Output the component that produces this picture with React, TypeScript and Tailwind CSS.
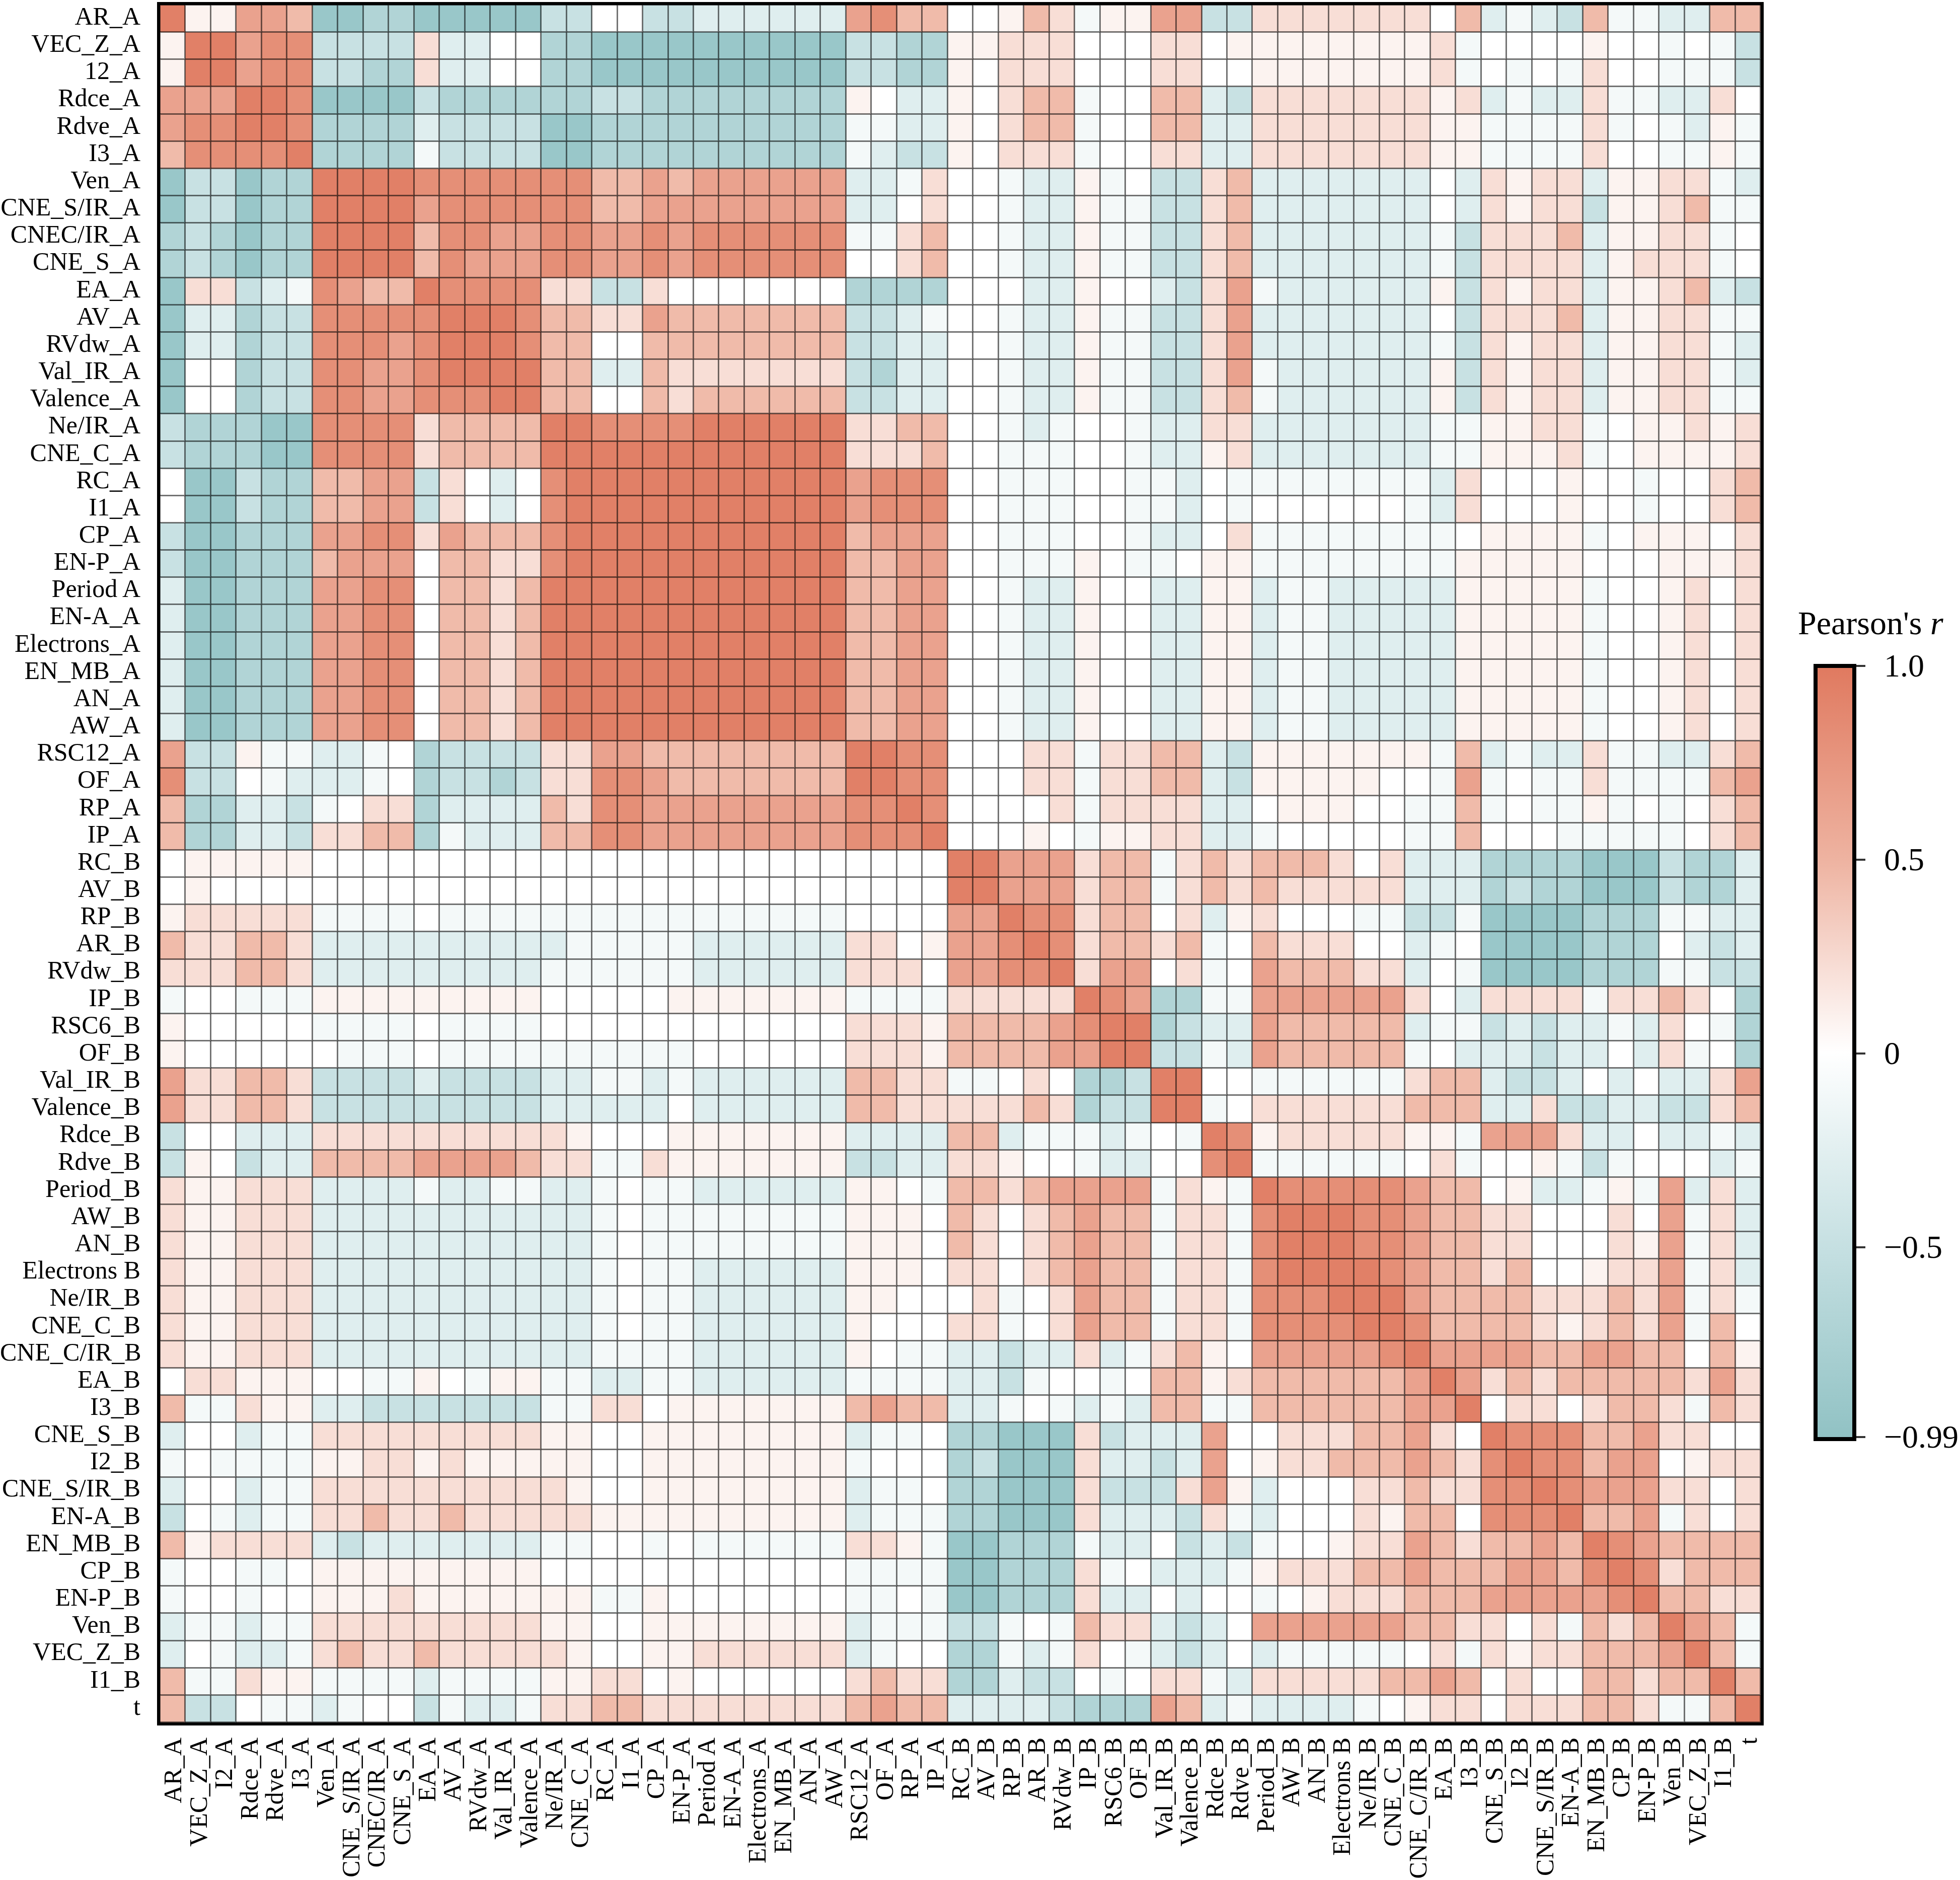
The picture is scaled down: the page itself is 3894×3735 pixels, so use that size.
const LABELS = [
  "AR_A", "VEC_Z_A", "I2_A", "Rdce_A", "Rdve_A", "I3_A", "Ven_A", "CNE_S/IR_A", "CNEC/IR_A", "CNE_S_A",
  "EA_A", "AV_A", "RVdw_A", "Val_IR_A", "Valence_A", "Ne/IR_A", "CNE_C_A", "RC_A", "I1_A", "CP_A",
  "EN-P_A", "Period A", "EN-A_A", "Electrons_A", "EN_MB_A", "AN_A", "AW_A", "RSC12_A", "OF_A", "RP_A",
  "IP_A", "RC_B", "AV_B", "RP_B", "AR_B", "RVdw_B", "IP_B", "RSC6_B", "OF_B", "Val_IR_B",
  "Valence_B", "Rdce_B", "Rdve_B", "Period_B", "AW_B", "AN_B", "Electrons B", "Ne/IR_B", "CNE_C_B", "CNE_C/IR_B",
  "EA_B", "I3_B", "CNE_S_B", "I2_B", "CNE_S/IR_B", "EN-A_B", "EN_MB_B", "CP_B", "EN-P_B", "Ven_B",
  "VEC_Z_B", "I1_B", "t",
];

// row labels print "12_A" for the third entry
const ROW_LABELS = LABELS.map((l, i) => (i === 2 ? "12_A" : l));

// lower triangle of the matrix, one char per cell (cols 0..i)
const base21 = "addcccCCDD0BBABEEEEEE";
const zA = "AppAAA" + "aaaaaaaaa" + "aaq0qq";
const ROWS: string[] = [
  "E",
  "pE",
  "pEE",
  "CCCE",
  "CDDEE",
  "BDDDDE",
  "dbbdccE",
  "dbbdccEE",
  "cbcdccEEE",
  "cbcdccEEEE",
  "dAAbaqDCBBE",
  "daacbbDDDDDE",
  "daacbbDDDCDEE",
  "d00cbbDDCCDEEE",
  "d00cbbDDCCDDDEE",
  "bcccddDDDDABBBBE",
  "bcccddDDDDABBBBEE",
  "0ddbccBBCCbA0a0DEE",
  "0ddbccBBCCbA0a0DEEE",
  "bddcccCCDDACBBBDEEEE",
  "bddcccBCCC0BBAADEEEEE",
  base21 + "E",
  base21 + "EE",
  base21 + "EEE",
  base21 + "EEEE",
  base21 + "EEEEE",
  base21 + "EEEEEE",
  "Cbbpqqaaq0cbbbbAACCBB" + "BBBBBBE",
  "Dbb0qaaaq0cbbcbAADDCB" + "BBBBBBEE",
  "Bccaabq0AAcaaaaBADDCC" + "CCCCCCDDE",
  "BccaabAABBcqaaaBBDDCC" + "CCCCCCDDDE",
  "0ppppp000000000000000" + "0000000000E",
  "0p0000000000000000000" + "0000000000EE",
  "pAAAAAqqqq0qqqqqqqqqq" + "qqqqqq0000CCE",
  "BAABBAaaaaaaaaaaqqqqq" + "aaaaaaAA0pCCDE",
  "AAABBAaaaaaaaaaqqqqqq" + "aaaaaaAAA0CCDDE",
  "q00qqqppppppppp00000p" + "ppppppqqqqAAAAAE",
  "p00000qqqq0qqqq000000" + "000000AAApBBBBCDE",
  "p000000qqq0qqqqqqqqqq" + "000000AAApBBBBCCEE",
  "CAABBAbbbbabbbbaaqqaq" + "aaaaaaBBAAqq0A0ccbE",
  "CAABBAbbbbbbbbbaaaaa0" + "aaaaaaBBAAAAABAcbbEE",
  "b00aaaAAAAAAAAAAp000p" + "ppppppaaaaBBaqqqaq0qE",
  "bp0baaBBBBCCCCBAAqqAp" + "ppppppbbaaAAp00qaa00D" + "E",
  "AppAAAaaaaqaaqqaaq0qq" + "aaaaaapp0qBBABCCCCqAp" + "qE",
  zA + "qqqqqqppp0BA0ABCBBqAA" + "qDE",
  zA + "qqqqqqppp0BA0ABCBBqAA" + "qDEE",
  zA + "aaaaaappp0AA0ABCBBqAA" + "qDEEE",
  zA + "aaaaaapp000Aq0ACBBqAA" + "qDDDEE",
  zA + "aaaaaap000AAq0ACBBqAA" + "qDDDDEE",
  "AppAAAaaaaaaaaaaaqqqq" + "aaaaaap0qqaabaaAaqABp" + "0CCCCCDE",
  "0AAppp00qqp0qppqqaaqq" + "aaaaaaqqqqaabq00q0BBp" + "ABBBBBBCE",
  "BqqAppaabbbbbbbqqAA0p" + "ppppppBCBBaaq0qaqaBBq" + "qBBBBBBCCE",
  "a00aqqAAAAAAAAApp00pp" + "ppppppaqq0ccdddAbaaaC" + "00AAABBCA0E",
  "q0qqqqppAApApppp p00pp".replace(" ", "") + "ppppppq000cbdddAaabaC" + "0pAABBBCBADE",
  "a00aqqAAAAAAAAAAp00pp" + "ppppppaqq0ccdddAbbbAC" + "pa000AABAADDE",
  "b0qaqqAABAABAAAAApppp" + "ppppppaqqqccdddAaaabA" + "qa000ApBB0DDDE",
  "BpAAAAabaaaaaaaqq00q0" + "qqqqqqAApqddcccqaa0ba" + "bq00pAACBABBCBE",
  "q00qq0ppppppppp000000" + "000000qqqqddcccAq0aaa" + "qpAAABBCBBBCCBDE",
  "q00q00pppApppppppqqp0" + "000000qq0qddcccAaa0a0" + "0q0pAAABBBCCCCCDE",
  "aqqaqqAAAAAAAAApp00pp" + "ppppppaqqqbbq0qBAAaba" + "0CCCCCCBBAA0AqBABE",
  "a0qaaqABAABAAAAAp00pp" + "AAAAAAaq00ccqaqA0qaba" + "0aqqqqq0AqApAABBBCE",
  "BqqAppqqqqaqqqqppAA0p" + "000000ABAAccabb0q0AAq" + "aAAAAABBCB0A00BBABBE",
  "Bbb0qqaq00bqaaqAABBAA" + "AAAAAABCBBaaaabcccCBa" + "qaaaaq0pAA0AAABBAqqBE",
];

const LEVEL: Record<string, number> = {
  E: 0.95, D: 0.82, C: 0.65, B: 0.45, A: 0.22, p: 0.08, "0": 0,
  q: -0.1, a: -0.28, b: -0.48, c: -0.7, d: -0.92, e: -0.98,
};

const STOPS: [number, number[]][] = [
  [-1, [145, 194, 196]],
  [-0.5, [198, 224, 226]],
  [0, [255, 255, 255]],
  [0.5, [238, 179, 161]],
  [1, [224, 122, 96]],
];

function colorFor(v: number) {
  for (let k = 0; k < STOPS.length - 1; k++) {
    const [v0, c0] = STOPS[k];
    const [v1, c1] = STOPS[k + 1];
    if (v >= v0 && v <= v1) {
      const t = (v - v0) / (v1 - v0);
      const c = c0.map((x, n) => Math.round(x + (c1[n] - x) * t));
      return `rgb(${c[0]},${c[1]},${c[2]})`;
    }
  }
  return "#fff";
}

function valueAt(i: number, j: number) {
  const r = Math.max(i, j);
  const c = Math.min(i, j);
  const ch = ROWS[r]?.[c] ?? "0";
  return LEVEL[ch] ?? 0;
}

const TICKS = [
  { label: "1.0", cls: "top-[-28px]" },
  { label: "0.5", cls: "top-[357px]" },
  { label: "0", cls: "top-[742px]" },
  { label: "\u22120.5", cls: "top-[1127px]" },
  { label: "\u22120.99", cls: "top-[1504px]" },
];

function Heatmap() {
  const cells = [];
  for (let i = 0; i < 63; i++) {
    for (let j = 0; j < 63; j++) {
      cells.push(
        <div
          key={`${i}-${j}`}
          className="shadow-[inset_-2px_-2px_0_rgba(0,0,0,0.55),inset_1px_1px_0_rgba(0,0,0,0.55)]"
          style={{ backgroundColor: colorFor(valueAt(i, j)) }}
        />
      );
    }
  }
  return (
    <div className="w-[3192px] h-[3424px] border-[6px] border-black grid grid-cols-[repeat(63,minmax(0,1fr))] grid-rows-[repeat(63,minmax(0,1fr))]">
      {cells}
    </div>
  );
}

function ColorBar() {
  return (
    <div className="flex flex-col pt-[1205px] pl-[68px]">
      <div className="text-[66px] leading-none whitespace-nowrap text-black">
        Pearson's <i>r</i>
      </div>
      <div className="mt-[48px] ml-[31px] flex">
        <div className="w-[85px] h-[1544px] border-[8px] border-black bg-[linear-gradient(to_bottom,#e07a60_0%,#eeb3a1_25%,#ffffff_50%,#c6e0e2_75%,#91c2c4_100%)]" />
        <div className="relative h-[1544px] w-[206px]">
          {TICKS.map((t) => (
            <div key={t.label} className={`absolute left-0 h-[64px] flex items-center ${t.cls}`}>
              <div className="w-[18px] h-[4px] bg-[#333]" />
              <span className="ml-[37px] text-[64px] leading-none whitespace-nowrap">{t.label}</span>
            </div>
          ))}
        </div>
      </div>
    </div>
  );
}

export default function App() {
  return (
    <div className="w-[3894px] h-[3735px] overflow-hidden bg-white text-black flex font-['Liberation_Serif','Times_New_Roman',serif]">
      <div className="flex flex-col pt-[4px]">
        <div className="flex">
          <div className="w-[279px] mr-[33px] pt-[1px] flex flex-col">
            {ROW_LABELS.map((l) => (
              <div key={l} className="h-[54.159px] leading-[54.159px] text-right text-[50px] whitespace-nowrap">
                {l}
              </div>
            ))}
          </div>
          <Heatmap />
        </div>
        <div className="ml-[318px] mt-[24px] w-[3180px] grid grid-cols-[repeat(63,minmax(0,1fr))]">
          {LABELS.map((l) => (
            <div key={l} className="flex justify-center items-start">
              <span className="[writing-mode:vertical-rl] rotate-180 text-[50px] leading-none whitespace-nowrap">
                {l}
              </span>
            </div>
          ))}
        </div>
      </div>
      <ColorBar />
    </div>
  );
}
